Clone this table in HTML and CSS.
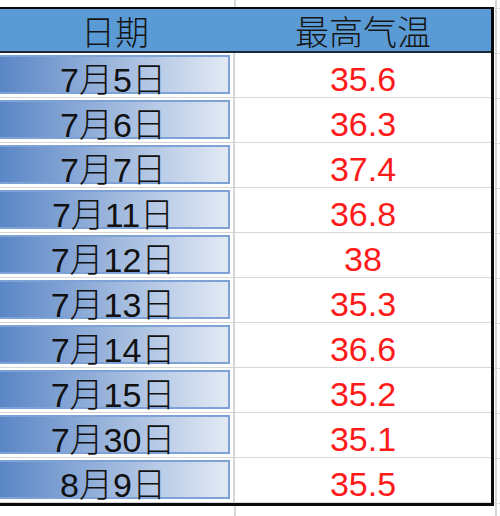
FILE: index.html
```html
<!DOCTYPE html>
<html lang="zh">
<head>
<meta charset="utf-8">
<title>最高气温</title>
<link rel="stylesheet" href="styles.css">
</head>
<body>
<div class="sheet">
  <div class="table">
    <div class="head">
      <div class="hcell hdate">日期</div>
      <div class="hcell">最高气温</div>
    </div>
    <div class="row"><div class="date"><div class="box">7月5日</div></div><div class="temp">35.6</div></div>
    <div class="row"><div class="date"><div class="box">7月6日</div></div><div class="temp">36.3</div></div>
    <div class="row"><div class="date"><div class="box">7月7日</div></div><div class="temp">37.4</div></div>
    <div class="row"><div class="date"><div class="box">7月11日</div></div><div class="temp">36.8</div></div>
    <div class="row"><div class="date"><div class="box">7月12日</div></div><div class="temp">38</div></div>
    <div class="row"><div class="date"><div class="box">7月13日</div></div><div class="temp">35.3</div></div>
    <div class="row"><div class="date"><div class="box">7月14日</div></div><div class="temp">36.6</div></div>
    <div class="row"><div class="date"><div class="box">7月15日</div></div><div class="temp">35.2</div></div>
    <div class="row"><div class="date"><div class="box">7月30日</div></div><div class="temp">35.1</div></div>
    <div class="row"><div class="date"><div class="box">8月9日</div></div><div class="temp">35.5</div></div>
  </div>
</div>
</body>
</html>
```
FILE: styles.css
```css
html, body {
  margin: 0;
  padding: 0;
  height: 100%;
}

body {
  overflow: hidden;
  background-color: #ffffff;
  background-image:
    linear-gradient(to right, transparent 234px, #d6d6d6 234px, #d6d6d6 236px, transparent 236px),
    linear-gradient(to right, transparent 495px, #d6d6d6 495px, #d6d6d6 497px, transparent 497px),
    repeating-linear-gradient(to bottom, #dcdcdc 0, #dcdcdc 1px, transparent 1px, transparent 45px);
  background-position: 0 0, 0 0, 0 8px;
  font-family: "Liberation Sans", "Noto Sans CJK SC", sans-serif;
  font-size: 34px;
  font-weight: 300;
  color: #111111;
}

.sheet {
  padding-top: 7px;
}

.table {
  width: 491px;
  border-top: 2px solid #0a0a0a;
  border-right: 3px solid #0a0a0a;
  border-bottom: 3px solid #0a0a0a;
  background: #ffffff;
}

.head {
  display: grid;
  grid-template-columns: 235px 256px;
  height: 42px;
  background: #5b9bd5;
  border-bottom: 2px solid #1c2834;
}

.hcell {
  text-align: center;
  line-height: 32px;
  padding-top: 8px;
  color: #161616;
}

.hdate {
  padding-right: 5px;
}

.row {
  display: grid;
  grid-template-columns: 235px 256px;
  height: 45px;
  box-sizing: border-box;
  border-bottom: 1px solid #d6d6d6;
}

.date {
  padding: 2px 3px 3px 0;
  border-right: 2px solid #d6d6d6;
}

.box {
  height: 39px;
  box-sizing: border-box;
  border: 2px solid #7ea1d6;
  border-left: none;
  background: linear-gradient(to right, #5a86c6 0%, #e2e9f4 100%);
  text-align: center;
  padding-right: 2px;
  padding-top: 7px;
  line-height: 32px;
  color: #111111;
}

.temp {
  text-align: center;
  line-height: 32px;
  padding-top: 10px;
  color: #ff1a1a;
}
```
